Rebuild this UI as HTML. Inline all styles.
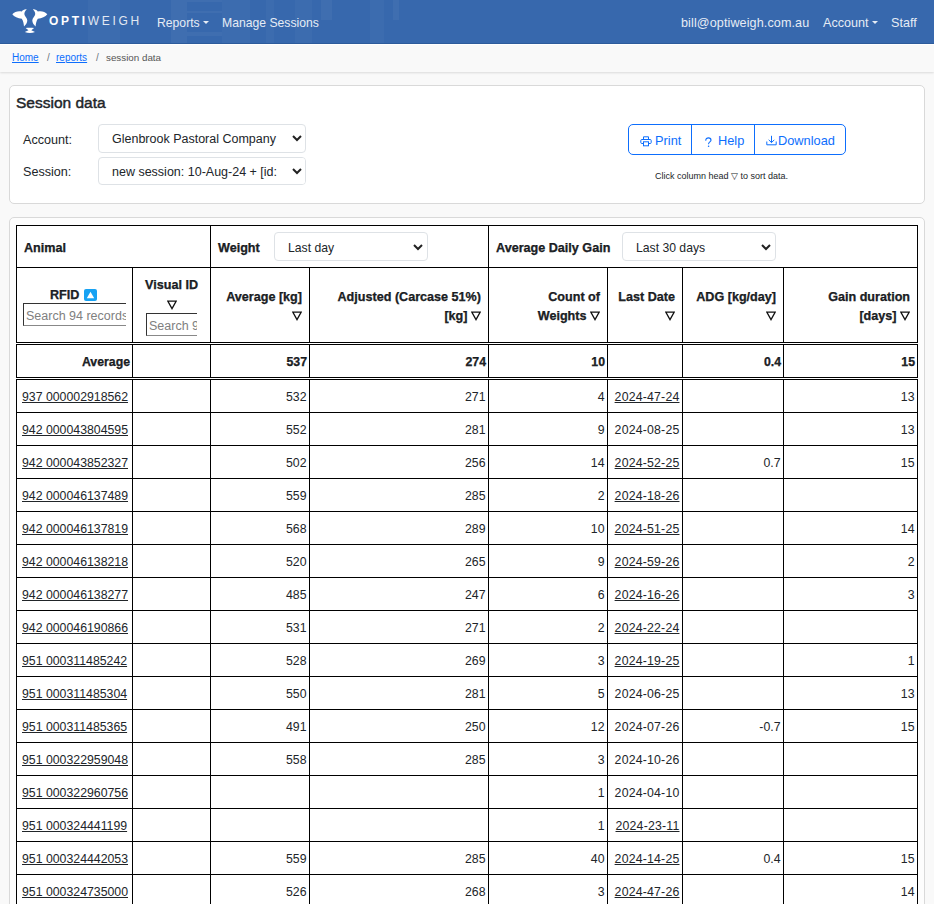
<!DOCTYPE html>
<html><head><meta charset="utf-8">
<style>
*{box-sizing:border-box}
html,body{margin:0;padding:0}
body{width:934px;height:904px;overflow:hidden;background:#f9f9f9;font-family:"Liberation Sans",sans-serif;color:#212529;position:relative}
.abs{position:absolute;white-space:nowrap}
.nav{position:absolute;left:0;top:0;width:934px;height:44px;background:#3768ad;border-bottom:1px solid #2e5c9d;overflow:hidden}
.nav .t{position:absolute;color:#e6ecf5;font-size:12.6px;line-height:16px;top:15px;white-space:nowrap}
.caret{display:inline-block;width:0;height:0;border-left:3.5px solid transparent;border-right:3.5px solid transparent;border-top:3.5px solid #e6ecf5;vertical-align:3px;margin-left:3px}
.bc{position:absolute;left:0;top:44px;width:934px;height:28px;background:#f9f9f9;border-top:1px solid #fff;box-shadow:0 1px 2px rgba(0,0,0,.12)}
.bc span{position:absolute;top:7px;font-size:10px;line-height:12px;white-space:nowrap}
.bc a{color:#0d6efd;text-decoration:underline}
.card{position:absolute;background:#fff;border:1px solid #d9d9d9;border-radius:5px}
.lbl{position:absolute;font-size:12.6px;line-height:16px;color:#212529}
.sel{position:absolute;height:28px;border:1px solid #dee2e6;border-radius:4px;background:#fff;font-size:12.5px;line-height:16px;color:#212529;white-space:nowrap;overflow:hidden}
.sel span{position:absolute;left:13px;top:6px}
.chev{position:absolute;width:12px;height:8px}
.btng{position:absolute;left:628px;top:124px;width:218px;height:31px;border:1px solid #0d6efd;border-radius:5px}
.btng .dv{position:absolute;top:0;width:1px;height:29px;background:#0d6efd}
.btng .bt{position:absolute;top:8px;font-size:12.8px;line-height:16px;color:#0d6efd;white-space:nowrap}
table{position:absolute;left:16px;top:225px;border-collapse:collapse;background:#fff;table-layout:fixed;width:901px}
td,th{border:1px solid #000;padding:4px 0 0 0;font-size:12.3px;line-height:19px;vertical-align:middle;white-space:nowrap;overflow:hidden}
th{font-weight:700;text-align:right;padding-right:7px;font-size:12.6px;-webkit-text-stroke:0.25px #000}
tr.r td{height:33px;text-align:right;padding-right:2.5px;padding-top:3px}
tr.r td:nth-child(6){letter-spacing:0.2px}
td a{color:#212529;text-decoration:underline}
tr.avg td{border-top:3px double #000;border-bottom:3px double #000;font-weight:700;text-align:right;padding-right:2px;padding-top:2px;-webkit-text-stroke:0.25px #000}
.tri{vertical-align:-1px}
.inp{position:absolute;border-top:1px solid #333;border-left:1px solid #333;border-bottom:1px solid #888;background:#fff;overflow:hidden;white-space:nowrap}
.inp span{position:absolute;left:2px;top:4px;font-size:12.5px;line-height:16px;color:#808080}
tr.r td.rf{text-align:left;padding-left:5px;padding-right:0}
</style></head><body>

<div class="nav">
  <svg width="934" height="44" style="position:absolute;left:0;top:0">
    <g fill="#fff" opacity="0.025">
      <rect x="88" y="0" width="32" height="44"/>
      <rect x="222" y="0" width="28" height="44"/>
      <rect x="266" y="0" width="8" height="44"/>
      <rect x="295" y="0" width="17" height="44"/>
      <rect x="370" y="0" width="14" height="44"/>
    </g>
    <g fill="#fff" opacity="0.04">
      <rect x="171" y="0" width="16" height="44"/>
      <rect x="187" y="0" width="35" height="2"/>
      <rect x="187" y="11" width="35" height="2"/>
      <rect x="187" y="32" width="35" height="4"/>
      <rect x="321" y="0" width="11" height="20"/>
      <rect x="393" y="0" width="6" height="20"/>
    </g>
  </svg>
  <svg width="40" height="30" viewBox="0 0 40 30" style="position:absolute;left:10px;top:6px">
    <g fill="#fff">
      <path d="M16.7 3.4 C15.2 4.5 14.2 6.5 14.4 8.3 C14.6 10.5 17.3 11.8 17.3 14.5 C17.3 17 15.5 19 14.0 20.5 C13.8 18 13.3 15 11.8 12.8 C8 12.5 4 10.5 2.3 8.2 C4.5 5.5 9 4.5 11.8 5.6 C12.8 4.0 14.8 3.0 16.7 3.4 Z"/>
      <path d="M 22.9 3.4 C 24.4 4.5 25.4 6.5 25.2 8.3 C 25.0 10.5 22.3 11.8 22.3 14.5 C 22.3 17.0 24.1 19.0 25.6 20.5 C 25.8 18.0 26.3 15.0 27.8 12.8 C 31.6 12.5 35.6 10.5 37.3 8.2 C 35.1 5.5 30.6 4.5 27.8 5.6 C 26.8 4.0 24.8 3.0 22.9 3.4 Z"/>
      <path d="M15.6 21.9 C18.5 21.6 21.3 21.6 24.1 21.9 L21.3 24.2 L25.0 25.9 C21.8 27.4 18.0 27.4 14.8 25.9 L18.5 24.2 Z"/>
    </g>
  </svg>
  <div class="abs" style="left:49px;top:14px;color:#fff;font-size:12px;line-height:14px;letter-spacing:2.7px"><b>OPTI</b><span style="opacity:.85">WEIGH</span></div>
  <div class="t" style="left:157px;font-size:12.2px">Reports<span class="caret"></span></div>
  <div class="t" style="left:222px;font-size:12.2px">Manage Sessions</div>
  <div class="t" style="left:681px;letter-spacing:0.1px">bill@optiweigh.com.au</div>
  <div class="t" style="left:823px">Account<span class="caret"></span></div>
  <div class="t" style="left:891px">Staff</div>
</div>

<div class="bc">
  <span style="left:12px"><a>Home</a></span>
  <span style="left:47px;color:#6c757d">/</span>
  <span style="left:56px"><a>reports</a></span>
  <span style="left:96px;color:#6c757d">/</span>
  <span style="left:106px;color:#555;font-size:9.8px">session data</span>
</div>

<div class="card" style="left:9px;top:85px;width:916px;height:119px">
</div>
<div class="abs" style="left:16px;top:94px;font-size:15.5px;line-height:18px;font-weight:400;-webkit-text-stroke:0.45px #212529;color:#212529">Session data</div>
<div class="lbl" style="left:23px;top:132px">Account:</div>
<div class="lbl" style="left:23px;top:164px">Session:</div>
<div class="sel" style="left:98px;top:124px;width:208px;height:29px"><span>Glenbrook Pastoral Company</span>
  <svg class="chev" style="left:192px;top:9px" viewBox="0 0 12 8"><path d="M2 2 L6 6 L10 2" fill="none" stroke="#222" stroke-width="2"/></svg></div>
<div class="sel" style="left:98px;top:157px;width:208px"><span>new session: 10-Aug-24 + [id:</span>
  <div style="position:absolute;left:182px;top:0;width:26px;height:26px;background:#fff"></div>
  <svg class="chev" style="left:192px;top:9px" viewBox="0 0 12 8"><path d="M2 2 L6 6 L10 2" fill="none" stroke="#222" stroke-width="2"/></svg></div>

<div class="btng">
  <div class="dv" style="left:62px"></div>
  <div class="dv" style="left:125px"></div>
  <svg style="position:absolute;left:11px;top:11px" width="12" height="11" viewBox="0 0 12 11"><g fill="none" stroke="#0d6efd" stroke-width="1"><path d="M3.5 3.5 V0.8 H8.5 V3.5"/><path d="M3 7.5 H1.8 Q0.8 7.5 0.8 6.5 V4.5 Q0.8 3.5 1.8 3.5 H10.2 Q11.2 3.5 11.2 4.5 V6.5 Q11.2 7.5 10.2 7.5 H9"/><rect x="3.5" y="5.8" width="5" height="4"/></g></svg>
  <div class="bt" style="left:26px">Print</div>
  <svg style="position:absolute;left:75px;top:12px" width="9" height="11" viewBox="0 0 9 11"><g fill="none" stroke="#0d6efd" stroke-width="1.1" stroke-linecap="round"><path d="M1.8 3.3 C1.8 1.8 3 0.9 4.4 0.9 C5.9 0.9 7 1.9 7 3.2 C7 4.8 4.6 5 4.6 6.8"/></g><circle cx="4.6" cy="9.2" r="0.8" fill="#0d6efd"/></svg>
  <div class="bt" style="left:89px">Help</div>
  <svg style="position:absolute;left:137px;top:10px" width="11" height="11" viewBox="0 0 11 11"><g fill="none" stroke="#0d6efd" stroke-width="1"><path d="M5.5 0.8 V7.5 M2.7 4.8 L5.5 7.6 L8.3 4.8 M0.8 6.5 V9.8 H10.2 V6.5"/></g></svg>
  <div class="bt" style="left:149px">Download</div>
</div>
<div class="abs" style="left:655px;top:171px;font-size:9px;line-height:11px;color:#212529">Click column head &#9661; to sort data.</div>

<div class="card" style="left:9px;top:217px;width:916px;height:700px;background:#fdfdfd"></div>

<table>
<colgroup><col style="width:116px"><col style="width:78px"><col style="width:99px"><col style="width:179px"><col style="width:119px"><col style="width:75px"><col style="width:101px"><col style="width:134px"></colgroup>
<tr style="height:42px">
  <th colspan="2" style="text-align:left;padding-left:7px">Animal</th>
  <th colspan="2" style="text-align:left;padding-left:7px">Weight</th>
  <th colspan="4" style="text-align:left;padding-left:7px">Average Daily Gain</th>
</tr>
<tr style="height:76px">
  <th style="text-align:left;padding:0 0 0 33px;vertical-align:top;padding-top:18px">RFID</th>
  <th style="text-align:center;padding:0;vertical-align:top;padding-top:7px;line-height:20px">Visual ID<br><svg class="tri" width="10" height="10" viewBox="0 0 10 10"><path d="M0.9 1.2 H9.1 L5 8.6 Z" fill="none" stroke="#111" stroke-width="1.3" stroke-linejoin="miter"/></svg></th>
  <th>Average [kg]<br><svg class="tri" width="10" height="10" viewBox="0 0 10 10"><path d="M0.9 1.2 H9.1 L5 8.6 Z" fill="none" stroke="#111" stroke-width="1.3" stroke-linejoin="miter"/></svg></th>
  <th>Adjusted (Carcase 51%)<br>[kg] <svg class="tri" width="10" height="10" viewBox="0 0 10 10"><path d="M0.9 1.2 H9.1 L5 8.6 Z" fill="none" stroke="#111" stroke-width="1.3" stroke-linejoin="miter"/></svg></th>
  <th>Count of<br>Weights <svg class="tri" width="10" height="10" viewBox="0 0 10 10"><path d="M0.9 1.2 H9.1 L5 8.6 Z" fill="none" stroke="#111" stroke-width="1.3" stroke-linejoin="miter"/></svg></th>
  <th>Last Date<br><svg class="tri" width="10" height="10" viewBox="0 0 10 10"><path d="M0.9 1.2 H9.1 L5 8.6 Z" fill="none" stroke="#111" stroke-width="1.3" stroke-linejoin="miter"/></svg></th>
  <th>ADG [kg/day]<br><svg class="tri" width="10" height="10" viewBox="0 0 10 10"><path d="M0.9 1.2 H9.1 L5 8.6 Z" fill="none" stroke="#111" stroke-width="1.3" stroke-linejoin="miter"/></svg></th>
  <th>Gain duration<br>[days] <svg class="tri" width="10" height="10" viewBox="0 0 10 10"><path d="M0.9 1.2 H9.1 L5 8.6 Z" fill="none" stroke="#111" stroke-width="1.3" stroke-linejoin="miter"/></svg></th>
</tr>
<tr class="avg" style="height:35px">
  <td>Average</td><td></td><td>537</td><td>274</td><td>10</td><td></td><td>0.4</td><td>15</td>
</tr>
<tr class="r" style="height:34px"><td class="rf"><a>937 000002918562</a></td><td></td><td>532</td><td>271</td><td>4</td><td><a>2024-47-24</a></td><td></td><td>13</td></tr>
<tr class="r"><td class="rf"><a>942 000043804595</a></td><td></td><td>552</td><td>281</td><td>9</td><td>2024-08-25</td><td></td><td>13</td></tr>
<tr class="r"><td class="rf"><a>942 000043852327</a></td><td></td><td>502</td><td>256</td><td>14</td><td><a>2024-52-25</a></td><td>0.7</td><td>15</td></tr>
<tr class="r"><td class="rf"><a>942 000046137489</a></td><td></td><td>559</td><td>285</td><td>2</td><td><a>2024-18-26</a></td><td></td><td></td></tr>
<tr class="r"><td class="rf"><a>942 000046137819</a></td><td></td><td>568</td><td>289</td><td>10</td><td><a>2024-51-25</a></td><td></td><td>14</td></tr>
<tr class="r"><td class="rf"><a>942 000046138218</a></td><td></td><td>520</td><td>265</td><td>9</td><td><a>2024-59-26</a></td><td></td><td>2</td></tr>
<tr class="r"><td class="rf"><a>942 000046138277</a></td><td></td><td>485</td><td>247</td><td>6</td><td><a>2024-16-26</a></td><td></td><td>3</td></tr>
<tr class="r"><td class="rf"><a>942 000046190866</a></td><td></td><td>531</td><td>271</td><td>2</td><td><a>2024-22-24</a></td><td></td><td></td></tr>
<tr class="r"><td class="rf"><a>951 000311485242</a></td><td></td><td>528</td><td>269</td><td>3</td><td><a>2024-19-25</a></td><td></td><td>1</td></tr>
<tr class="r"><td class="rf"><a>951 000311485304</a></td><td></td><td>550</td><td>281</td><td>5</td><td>2024-06-25</td><td></td><td>13</td></tr>
<tr class="r"><td class="rf"><a>951 000311485365</a></td><td></td><td>491</td><td>250</td><td>12</td><td>2024-07-26</td><td>-0.7</td><td>15</td></tr>
<tr class="r"><td class="rf"><a>951 000322959048</a></td><td></td><td>558</td><td>285</td><td>3</td><td>2024-10-26</td><td></td><td></td></tr>
<tr class="r"><td class="rf"><a>951 000322960756</a></td><td></td><td></td><td></td><td>1</td><td>2024-04-10</td><td></td><td></td></tr>
<tr class="r"><td class="rf"><a>951 000324441199</a></td><td></td><td></td><td></td><td>1</td><td><a>2024-23-11</a></td><td></td><td></td></tr>
<tr class="r"><td class="rf"><a>951 000324442053</a></td><td></td><td>559</td><td>285</td><td>40</td><td><a>2024-14-25</a></td><td>0.4</td><td>15</td></tr>
<tr class="r"><td class="rf"><a>951 000324735000</a></td><td></td><td>526</td><td>268</td><td>3</td><td><a>2024-47-26</a></td><td></td><td>14</td></tr>

</table>

<div class="sel" style="left:274px;top:232px;width:154px;height:29px"><span style="left:13px;top:7px;font-size:12.2px">Last day</span>
  <svg class="chev" style="left:137px;top:10px" viewBox="0 0 12 8"><path d="M2 2 L6 6 L10 2" fill="none" stroke="#222" stroke-width="2"/></svg></div>
<div class="sel" style="left:622px;top:232px;width:154px;height:29px"><span style="left:13px;top:7px;font-size:12.2px">Last 30 days</span>
  <svg class="chev" style="left:137px;top:10px" viewBox="0 0 12 8"><path d="M2 2 L6 6 L10 2" fill="none" stroke="#222" stroke-width="2"/></svg></div>
<div style="position:absolute;left:84px;top:289px;width:13px;height:12px;background:#17a2f3;border-radius:2px"></div>
<svg style="position:absolute;left:84px;top:289px" width="13" height="12" viewBox="0 0 13 12"><path d="M6.5 2.8 L10.2 9.2 L2.8 9.2 Z" fill="#fff"/></svg>
<div class="inp" style="left:23px;top:303px;width:103px;height:23px"><span>Search 94 records</span></div>
<div class="inp" style="left:146px;top:313px;width:51px;height:23px"><span>Search 94 records</span></div>


</body></html>
